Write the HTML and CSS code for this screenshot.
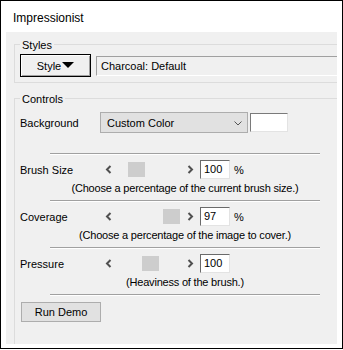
FILE: index.html
```html
<!DOCTYPE html>
<html>
<head>
<meta charset="utf-8">
<link rel="stylesheet" href="styles.css">
</head>
<body>
<div class="frame">
  <div class="header"><span class="title">Impressionist</span></div>
  <div class="panel">
    <div class="group styles-group">
      <span class="legend">Styles</span>
      <div class="style-row">
        <button class="style-btn">Style<svg class="tri" width="12" height="6" viewBox="0 0 12 6"><polygon points="0,0 12,0 6,6" fill="#000"/></svg></button>
        <div class="readonly">Charcoal: Default</div>
      </div>
    </div>
    <div class="group controls-group">
      <span class="legend">Controls</span>
      <div class="bg-row">
        <span class="label">Background</span>
        <div class="combo"><span>Custom Color</span><svg class="chev" width="8" height="5" viewBox="0 0 8 5"><polyline points="0.5,0.5 4,4 7.5,0.5" fill="none" stroke="#555" stroke-width="1"/></svg></div>
        <div class="swatch"></div>
      </div>
      <div class="sep first"></div>

      <div class="row">
        <span class="label">Brush Size</span>
        <div class="scrollbar">
          <span class="arrow"><svg width="7" height="9" viewBox="0 0 7 9"><polyline points="5.5,1 2,4.5 5.5,8" fill="none" stroke="#505050" stroke-width="2"/></svg></span>
          <div class="track"><div class="thumb" style="margin-left:11px"></div></div>
          <span class="arrow"><svg width="7" height="9" viewBox="0 0 7 9"><polyline points="1.5,1 5,4.5 1.5,8" fill="none" stroke="#505050" stroke-width="2"/></svg></span>
        </div>
        <div class="edit">100</div>
        <span class="unit">%</span>
      </div>
      <div class="desc">(Choose a percentage of the current brush size.)</div>
      <div class="sep"></div>

      <div class="row">
        <span class="label">Coverage</span>
        <div class="scrollbar">
          <span class="arrow"><svg width="7" height="9" viewBox="0 0 7 9"><polyline points="5.5,1 2,4.5 5.5,8" fill="none" stroke="#505050" stroke-width="2"/></svg></span>
          <div class="track"><div class="thumb" style="margin-left:46px"></div></div>
          <span class="arrow"><svg width="7" height="9" viewBox="0 0 7 9"><polyline points="1.5,1 5,4.5 1.5,8" fill="none" stroke="#505050" stroke-width="2"/></svg></span>
        </div>
        <div class="edit">97</div>
        <span class="unit">%</span>
      </div>
      <div class="desc">(Choose a percentage of the image to cover.)</div>
      <div class="sep"></div>

      <div class="row">
        <span class="label">Pressure</span>
        <div class="scrollbar">
          <span class="arrow"><svg width="7" height="9" viewBox="0 0 7 9"><polyline points="5.5,1 2,4.5 5.5,8" fill="none" stroke="#505050" stroke-width="2"/></svg></span>
          <div class="track"><div class="thumb" style="margin-left:25px"></div></div>
          <span class="arrow"><svg width="7" height="9" viewBox="0 0 7 9"><polyline points="1.5,1 5,4.5 1.5,8" fill="none" stroke="#505050" stroke-width="2"/></svg></span>
        </div>
        <div class="edit">100</div>
      </div>
      <div class="desc">(Heaviness of the brush.)</div>
      <div class="sep"></div>

      <button class="run">Run Demo</button>
    </div>
  </div>
</div>
</body>
</html>
```
FILE: styles.css
```css
* { box-sizing: border-box; }
body {
  margin: 0;
  background: #fff;
  font-family: "Liberation Sans", Arial, sans-serif;
  font-size: 11px;
  color: #000;
}
.frame {
  width: 343px;
  height: 349px;
  border: 1px solid #000;
  background: #fff;
  display: flex;
  flex-direction: column;
}
.header {
  height: 31px;
  flex: none;
  padding: 10px 0 0 12px;
  font-size: 12px;
  line-height: 14px;
}
.panel {
  margin-left: 5px;
  width: 331px;
  height: 312px;
  flex: none;
  background: #f0f0f0;
  overflow: hidden;
}
.group {
  position: relative;
  border: 1px solid #dcdcdc;
  margin-left: 8px;
  width: 400px;
}
.legend {
  position: absolute;
  left: 5px;
  top: -6px;
  padding: 0 2px;
  background: #f0f0f0;
  line-height: 13px;
}
.styles-group {
  margin-top: 12px;
  padding: 9px 0 5px 5px;
}
.style-row {
  display: flex;
  align-items: center;
  gap: 5px;
  height: 23px;
}
.style-btn {
  width: 71px;
  height: 23px;
  border: 1px solid #000;
  box-shadow: inset 1px 1px #fff, inset -1px -1px #a0a0a0;
  background: #f0f0f0;
  font: inherit;
  color: #000;
  padding: 0;
  display: flex;
  align-items: center;
  justify-content: center;
  flex: none;
}
.tri { margin-left: 1px; margin-top: -2px; }
.readonly {
  flex: 1;
  height: 20px;
  border-top: 1px solid #a0a0a0;
  border-left: 1px solid #a0a0a0;
  border-bottom: 1px solid #fff;
  padding-left: 4px;
  line-height: 18px;
}
.controls-group {
  margin-top: 15px;
  height: 300px;
  padding: 13px 0 0 5px;
}
.bg-row {
  display: flex;
  align-items: center;
  height: 21px;
}
.label {
  width: 80px;
  flex: none;
}
.combo {
  width: 148px;
  height: 21px;
  border: 1px solid #adadad;
  background: #e1e1e1;
  display: flex;
  align-items: center;
  justify-content: space-between;
  padding: 0 5px 0 6px;
}
.chev { margin-top: 2px; }
.swatch {
  width: 38px;
  height: 19px;
  margin-left: 2px;
  background: #fff;
  border-top: 1px solid #7a7a7a;
  border-left: 1px solid #7a7a7a;
  border-right: 1px solid #e3e3e3;
  border-bottom: 1px solid #e3e3e3;
}
.sep {
  margin: 5px 0 0 30px;
  width: 270px;
  height: 2px;
  border-top: 1px solid #a0a0a0;
  border-bottom: 1px solid #fff;
}
.sep.first { margin-top: 20px; }
.row {
  display: flex;
  align-items: center;
  height: 19px;
  margin-top: 5px;
}
.scrollbar {
  width: 99px;
  height: 17px;
  display: flex;
  flex: none;
}
.arrow {
  width: 17px;
  height: 17px;
  display: flex;
  align-items: center;
  justify-content: center;
  flex: none;
}
.track {
  flex: 1;
  display: flex;
  align-items: center;
}
.thumb {
  width: 17px;
  height: 15px;
  background: #cdcdcd;
}
.edit {
  width: 30px;
  height: 19px;
  margin-left: 1px;
  background: #fff;
  border-top: 1px solid #6a6a6a;
  border-left: 1px solid #6a6a6a;
  border-right: 1px solid #e3e3e3;
  border-bottom: 1px solid #e3e3e3;
  padding-left: 3px;
  line-height: 17px;
}
.unit { margin-left: 4px; }
.desc {
  margin: 3px 0 0 30px;
  width: 270px;
  text-align: center;
  line-height: 13px;
  letter-spacing: -0.2px;
}
.run {
  display: block;
  margin: 6px 0 0 1px;
  width: 80px;
  height: 20px;
  border: 1px solid #adadad;
  background: #e1e1e1;
  font: inherit;
  color: #000;
  padding: 0;
}
```
